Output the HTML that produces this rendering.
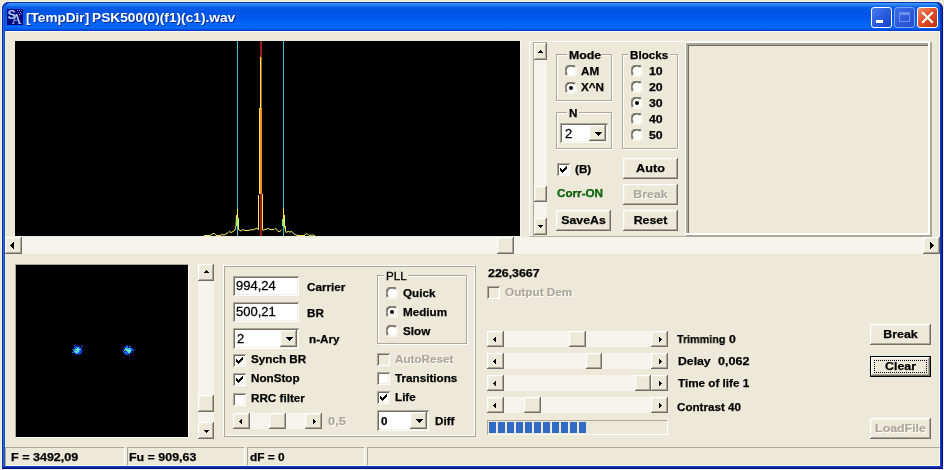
<!DOCTYPE html>
<html><head><meta charset="utf-8"><title>PSK500</title><style>
html,body{margin:0;padding:0}
body{width:944px;height:470px;position:relative;overflow:hidden;background:#ece7d6;font-family:"Liberation Sans",sans-serif;font-size:11.5px}
#win{position:absolute;left:2px;top:2px;width:941px;height:467px;background:#ece9d8;box-sizing:border-box;border-radius:7px 7px 0 0;box-shadow:0 0 0 1px #f3f3f4}
#bl{position:absolute;left:2px;top:20px;width:3px;height:449px;background:linear-gradient(90deg,#0831b4 0,#0831b4 33.3%,#2a62e4 33.3%,#2a62e4 66.6%,#1a50b0 66.6%)}
#br{position:absolute;left:940px;top:20px;width:3px;height:449px;background:linear-gradient(90deg,#1638bc 0,#1638bc 33.3%,#0c2cac 33.3%,#0c2cac 66.6%,#021084 66.6%)}
#bb{position:absolute;left:2px;top:466px;width:941px;height:3px;background:linear-gradient(180deg,#1638bc 0,#1638bc 33.3%,#0c2cac 33.3%,#0c2cac 66.6%,#021084 66.6%)}
#inl{position:absolute;left:5px;top:31px;width:935px;height:435px;box-sizing:border-box;border:1px solid #fbfbf8;border-left-color:#e6f2fb}
#tb{position:absolute;left:2px;top:2px;width:941px;height:29px;border-radius:7px 7px 0 0;box-shadow:inset 1px 1px 0 #0831b4,inset -1px 0 0 #021084,inset 2px 0 0 #2a62e4,inset 3px 0 0 #1a50c8,inset -3px 0 0 #1038bc;background:linear-gradient(180deg,#0a3fd0 0,#3c96ff 5%,#2a80f8 10%,#0560e8 18%,#0055e5 30%,#0058ee 55%,#0465fb 75%,#0668ff 88%,#0358ea 93%,#0038c8 100%)}
#ico{position:absolute;left:7px;top:9px}
.title{position:absolute;will-change:transform;transform-origin:0 50%;top:9px;line-height:18px;color:#fff;font-weight:bold;font-size:13.6px;text-shadow:1px 1px 0 #0a2a90;white-space:nowrap}
.cb{position:absolute;top:7px;width:21px;height:21px;box-sizing:border-box;border:1px solid #fff;border-radius:3px;background:linear-gradient(135deg,#4a7cf0 0,#2a5ce0 50%,#1a44c8 100%)}
.cb.dim{border-color:#7f9fe8;background:linear-gradient(135deg,#3f6fe8 0,#2a58dc 60%,#2450d0 100%)}
.cb.red{background:linear-gradient(135deg,#f09070 0,#e05028 45%,#c03010 100%)}
.t{position:absolute;will-change:transform;white-space:nowrap;line-height:16px;height:16px;color:#000;transform-origin:0 50%;transform:scaleX(1.015)}
.t.b{font-weight:bold;-webkit-text-stroke:.25px #000}
.t.n{font-weight:normal;-webkit-text-stroke:.3px #000}
.t.e{font-weight:normal;font-size:13px;transform:none;-webkit-text-stroke:.3px #000}
.t.c{text-align:center;transform-origin:50% 50%;transform:scaleX(1.075)}
.t.dis{color:#aca899;text-shadow:1px 1px 0 #fff;-webkit-text-stroke:.2px #aca899}
.r{position:absolute;box-sizing:border-box;background:#ece9d8;box-shadow:inset -1px -1px 0 #716f64,inset 1px 1px 0 #fff,inset -2px -2px 0 #aca899,inset 2px 2px 0 #f1efe2}
.s{position:absolute;box-sizing:border-box;box-shadow:inset 1px 1px 0 #aca899,inset -1px -1px 0 #fff,inset 2px 2px 0 #716f64,inset -2px -2px 0 #f1efe2}
.trk{position:absolute;background:#f6f4ec repeating-conic-gradient(#fbfaf6 0 25%,#f0eee3 0 50%) 0 0/2px 2px}
.g{position:absolute;box-sizing:border-box;border:1px solid #aca899;box-shadow:1px 1px 0 #fff,inset 1px 1px 0 #fff}
.pg{position:absolute;box-sizing:border-box;border:1px solid;border-color:#aca899 #fff #fff #aca899}
.sp{position:absolute;box-sizing:border-box;border:1px solid;border-color:#aca899 #fff #fff #aca899}
#rp{position:absolute;left:685px;top:41px;width:247px;height:196px;box-sizing:border-box;border:2px solid;border-color:#fff #aca899 #aca899 #fff;border-left-width:1px;box-shadow:inset -1px -1px 0 #fff,inset -2px -2px 0 #fff,inset 1px 1px 0 #aca899,inset 2px 2px 0 #aca899,inset 3px 3px 0 #716f64}
#bp{position:absolute;left:223px;top:265px;width:253px;height:172px;box-sizing:border-box;border:1px solid;border-color:#fff #aca899 #aca899 #fff;box-shadow:inset 1px 1px 0 #aca899,inset -1px -1px 0 #fff}
</style></head><body>
<div id="win"></div><div id="bl"></div><div id="br"></div><div id="bb"></div><div id="inl"></div>
<div id="tb"></div>
<svg id="ico" width="16" height="16" viewBox="0 0 16 16"><rect width="16" height="16" fill="#06067e"/><text x="0.6" y="9.6" font-family="Liberation Sans,sans-serif" font-weight="bold" font-size="12.5" fill="#a9c6ea">S</text><text x="4.6" y="15.2" font-family="Liberation Serif,serif" font-size="14" fill="#b4d8ee">A</text><rect x="10" y="1" width="1" height="1" fill="#8a8ad8"/><rect x="12" y="1" width="1" height="1" fill="#9a9ae0"/><rect x="14" y="1" width="1" height="1" fill="#7a7ad0"/><rect x="11" y="3" width="1" height="1" fill="#8a8ad8"/><rect x="13" y="3" width="1" height="1" fill="#9a9ae0"/><rect x="12" y="5" width="1" height="1" fill="#dcdcff"/><rect x="14" y="4" width="1" height="1" fill="#7a7ad0"/></svg>
<span class="title" style="left:26px">[TempDir]</span>
<span class="title" style="left:92px;transform:scaleX(1.008)">PSK500(0)(f1)(c1).wav</span>
<div class="cb" style="left:871px"><div style="position:absolute;left:4px;top:12px;width:7px;height:3px;background:#fff"></div></div>
<div class="cb dim" style="left:894px"><div style="position:absolute;left:4px;top:4px;width:11px;height:10px;border:1px solid #6f8fe8;border-top-width:3px;box-sizing:border-box"></div></div>
<div class="cb red" style="left:917px"><svg width="21" height="21" style="position:absolute;left:-1px;top:-1px"><path d="M6 6 L15 15 M15 6 L6 15" stroke="#fff" stroke-width="2.2" stroke-linecap="square"/></svg></div>
<div style="position:absolute;left:15px;top:41px;width:505px;height:195px;background:#000"></div>
<div style="position:absolute;left:520px;top:41px;width:1px;height:196px;background:#f6f5ee"></div>
<svg width="505" height="195" viewBox="15 41 505 195" style="position:absolute;left:15px;top:41px" shape-rendering="crispEdges">
<rect x="237" y="41" width="1" height="195" fill="#3fbfd6"/>
<rect x="283" y="41" width="1" height="195" fill="#3fbfd6"/>
<rect x="260" y="41" width="2" height="195" fill="#9c1c14"/>
<g fill="none" stroke="#f2ea62" stroke-width="1" shape-rendering="auto">
<polyline points="204,235.5 209,235.5 211,235 213,233.5 214.5,233.5 216,235.5 220,235.5 222,234.5 224,235 226,234 228,232.5 229,231.5 231,232.5 233,231.5 235,230 236,226 236.5,215"/>
<polyline points="238.5,219 238.5,229 239.5,230.5 241,231 243,229.5 245,230.5 249,230.5 251,229.5 253,230 255,229 257,228 258,229.5"/>
<polyline points="262.5,229.5 264,230.5 265,229 267,229.5 268,228 270,229.5 274,229.5 275,228.5 277,229.5 279,232 281,230.5 282,229.5"/>
<polyline points="284.5,215 284.5,226 286,232.5 288,231.5 290,232 292,231.5 294,234 296,235 299,235.5 304,235.5 306,234 307,233.5 308.5,235 310,235.5 312,235 315,235.5"/>
</g>
<rect x="236" y="215" width="1" height="4" fill="#f2ea62"/><rect x="237" y="209" width="1" height="9" fill="#f4e83a"/><rect x="236" y="219" width="2" height="7" fill="#9af070"/><rect x="238" y="218" width="1" height="12" fill="#e8ee60"/>
<rect x="284" y="215" width="1" height="12" fill="#f2ea62"/><rect x="283" y="208" width="1" height="11" fill="#f4e83a"/><rect x="282" y="219" width="2" height="7" fill="#9af070"/><rect x="285" y="226" width="1" height="5" fill="#e8ee60"/>
<rect x="260" y="57" width="1" height="51" fill="#f6ec4a"/><rect x="261" y="57" width="1" height="51" fill="#b87820" opacity=".55"/>
<rect x="259" y="108" width="1" height="87" fill="#f8ea50"/><rect x="260" y="108" width="2" height="86" fill="#f28a1e"/><rect x="260" y="106" width="1" height="3" fill="#f8ea50"/>
<rect x="258" y="195" width="1" height="35" fill="#f2ea62"/><rect x="259" y="194" width="1" height="42" fill="#200800"/><rect x="262" y="194" width="1" height="36" fill="#f2ea62"/>
<rect x="204" y="235" width="6" height="1" fill="#f2ea62"/><rect x="297" y="235" width="8" height="1" fill="#f2ea62"/>
</svg>

<div style="position:absolute;left:529px;top:41px;width:156px;height:196px;border-left:1px solid #fff;border-top:1px solid #fff;border-bottom:1px solid #b4b1a2;box-sizing:border-box"></div>
<div style="position:absolute;left:533px;top:42px;width:14px;height:194px;border-left:1px solid #aca899;border-top:1px solid #aca899;box-sizing:border-box"></div>
<div class="trk" style="left:534px;top:43px;width:13px;height:192px"></div>
<div class="r" style="left:534px;top:43px;width:13px;height:17px;"></div>
<div class="r" style="left:534px;top:218px;width:13px;height:17px;"></div>
<div class="r" style="left:534px;top:186px;width:13px;height:16px;"></div>
<svg width="5" height="3" shape-rendering="crispEdges" style="position:absolute;left:538px;top:50px" fill="#000"><rect x="2" y="0" width="1" height="1"/><rect x="1" y="1" width="3" height="1"/><rect x="0" y="2" width="5" height="1"/></svg>
<svg width="5" height="3" shape-rendering="crispEdges" style="position:absolute;left:538px;top:225px" fill="#000"><rect x="0" y="0" width="5" height="1"/><rect x="1" y="1" width="3" height="1"/><rect x="2" y="2" width="1" height="1"/></svg>
<div class="g" style="left:556px;top:54px;width:56px;height:47px"></div>
<div style="position:absolute;left:567px;top:54px;width:34px;height:2px;background:#ece9d8"></div>
<span class="t b" style="left:569px;top:47px;transform:scaleX(1.07);">Mode</span>
<svg width="12" height="12" style="position:absolute;left:565px;top:65px"><circle cx="6" cy="6" r="5.5" fill="#ffffff"/><path d="M1.6 10.4 A6 6 0 0 1 10.4 1.6" stroke="#8f8c7e" stroke-width="1.2" fill="none"/><path d="M2.4 9.6 A5 5 0 0 1 9.6 2.4" stroke="#55534a" stroke-width="1.1" fill="none"/><path d="M10.4 1.6 A6 6 0 0 1 1.6 10.4" stroke="#ffffff" stroke-width="1" fill="none"/><path d="M9.6 2.4 A5 5 0 0 1 2.4 9.6" stroke="#f1efe2" stroke-width="1" fill="none"/><circle cx="6" cy="6" r="4" fill="#fff"/></svg>
<span class="t b" style="left:581px;top:63px;">AM</span>
<svg width="12" height="12" style="position:absolute;left:565px;top:82px"><circle cx="6" cy="6" r="5.5" fill="#ffffff"/><path d="M1.6 10.4 A6 6 0 0 1 10.4 1.6" stroke="#8f8c7e" stroke-width="1.2" fill="none"/><path d="M2.4 9.6 A5 5 0 0 1 9.6 2.4" stroke="#55534a" stroke-width="1.1" fill="none"/><path d="M10.4 1.6 A6 6 0 0 1 1.6 10.4" stroke="#ffffff" stroke-width="1" fill="none"/><path d="M9.6 2.4 A5 5 0 0 1 2.4 9.6" stroke="#f1efe2" stroke-width="1" fill="none"/><circle cx="6" cy="6" r="4" fill="#fff"/><circle cx="6" cy="6" r="2" fill="#000"/></svg>
<span class="t b" style="left:581px;top:79px;">X^N</span>
<div class="g" style="left:556px;top:112px;width:56px;height:37px"></div>
<div style="position:absolute;left:567px;top:112px;width:12px;height:2px;background:#ece9d8"></div>
<span class="t b" style="left:569px;top:105px;">N</span>
<div class="s" style="left:560px;top:123px;width:48px;height:20px;background:#fff;"></div>
<div class="r" style="left:589px;top:125px;width:17px;height:16px;"></div>
<svg width="7" height="4" shape-rendering="crispEdges" style="position:absolute;left:595px;top:132px" fill="#000"><rect x="0" y="0" width="7" height="1"/><rect x="1" y="1" width="5" height="1"/><rect x="2" y="2" width="3" height="1"/><rect x="3" y="3" width="1" height="1"/></svg>
<span class="t e" style="left:565px;top:126px;">2</span>
<div class="g" style="left:622px;top:54px;width:56px;height:95px"></div>
<div style="position:absolute;left:628px;top:54px;width:42px;height:2px;background:#ece9d8"></div>
<span class="t b" style="left:630px;top:47px;">Blocks</span>
<svg width="12" height="12" style="position:absolute;left:631px;top:65px"><circle cx="6" cy="6" r="5.5" fill="#ffffff"/><path d="M1.6 10.4 A6 6 0 0 1 10.4 1.6" stroke="#8f8c7e" stroke-width="1.2" fill="none"/><path d="M2.4 9.6 A5 5 0 0 1 9.6 2.4" stroke="#55534a" stroke-width="1.1" fill="none"/><path d="M10.4 1.6 A6 6 0 0 1 1.6 10.4" stroke="#ffffff" stroke-width="1" fill="none"/><path d="M9.6 2.4 A5 5 0 0 1 2.4 9.6" stroke="#f1efe2" stroke-width="1" fill="none"/><circle cx="6" cy="6" r="4" fill="#fff"/></svg>
<span class="t b" style="left:649px;top:63px;transform:scaleX(1.07);">10</span>
<svg width="12" height="12" style="position:absolute;left:631px;top:81px"><circle cx="6" cy="6" r="5.5" fill="#ffffff"/><path d="M1.6 10.4 A6 6 0 0 1 10.4 1.6" stroke="#8f8c7e" stroke-width="1.2" fill="none"/><path d="M2.4 9.6 A5 5 0 0 1 9.6 2.4" stroke="#55534a" stroke-width="1.1" fill="none"/><path d="M10.4 1.6 A6 6 0 0 1 1.6 10.4" stroke="#ffffff" stroke-width="1" fill="none"/><path d="M9.6 2.4 A5 5 0 0 1 2.4 9.6" stroke="#f1efe2" stroke-width="1" fill="none"/><circle cx="6" cy="6" r="4" fill="#fff"/></svg>
<span class="t b" style="left:649px;top:79px;transform:scaleX(1.07);">20</span>
<svg width="12" height="12" style="position:absolute;left:631px;top:97px"><circle cx="6" cy="6" r="5.5" fill="#ffffff"/><path d="M1.6 10.4 A6 6 0 0 1 10.4 1.6" stroke="#8f8c7e" stroke-width="1.2" fill="none"/><path d="M2.4 9.6 A5 5 0 0 1 9.6 2.4" stroke="#55534a" stroke-width="1.1" fill="none"/><path d="M10.4 1.6 A6 6 0 0 1 1.6 10.4" stroke="#ffffff" stroke-width="1" fill="none"/><path d="M9.6 2.4 A5 5 0 0 1 2.4 9.6" stroke="#f1efe2" stroke-width="1" fill="none"/><circle cx="6" cy="6" r="4" fill="#fff"/><circle cx="6" cy="6" r="2" fill="#000"/></svg>
<span class="t b" style="left:649px;top:95px;transform:scaleX(1.07);">30</span>
<svg width="12" height="12" style="position:absolute;left:631px;top:113px"><circle cx="6" cy="6" r="5.5" fill="#ffffff"/><path d="M1.6 10.4 A6 6 0 0 1 10.4 1.6" stroke="#8f8c7e" stroke-width="1.2" fill="none"/><path d="M2.4 9.6 A5 5 0 0 1 9.6 2.4" stroke="#55534a" stroke-width="1.1" fill="none"/><path d="M10.4 1.6 A6 6 0 0 1 1.6 10.4" stroke="#ffffff" stroke-width="1" fill="none"/><path d="M9.6 2.4 A5 5 0 0 1 2.4 9.6" stroke="#f1efe2" stroke-width="1" fill="none"/><circle cx="6" cy="6" r="4" fill="#fff"/></svg>
<span class="t b" style="left:649px;top:111px;transform:scaleX(1.07);">40</span>
<svg width="12" height="12" style="position:absolute;left:631px;top:129px"><circle cx="6" cy="6" r="5.5" fill="#ffffff"/><path d="M1.6 10.4 A6 6 0 0 1 10.4 1.6" stroke="#8f8c7e" stroke-width="1.2" fill="none"/><path d="M2.4 9.6 A5 5 0 0 1 9.6 2.4" stroke="#55534a" stroke-width="1.1" fill="none"/><path d="M10.4 1.6 A6 6 0 0 1 1.6 10.4" stroke="#ffffff" stroke-width="1" fill="none"/><path d="M9.6 2.4 A5 5 0 0 1 2.4 9.6" stroke="#f1efe2" stroke-width="1" fill="none"/><circle cx="6" cy="6" r="4" fill="#fff"/></svg>
<span class="t b" style="left:649px;top:127px;transform:scaleX(1.07);">50</span>
<div class="s" style="left:557px;top:163px;width:13px;height:13px;background:#fff;"><svg width="13" height="13" shape-rendering="crispEdges" style="position:absolute;left:0;top:0"><rect x="3" y="5" width="1" height="3" fill="#000"/><rect x="4" y="6" width="1" height="3" fill="#000"/><rect x="5" y="7" width="1" height="3" fill="#000"/><rect x="6" y="6" width="1" height="3" fill="#000"/><rect x="7" y="5" width="1" height="3" fill="#000"/><rect x="8" y="4" width="1" height="3" fill="#000"/><rect x="9" y="3" width="1" height="3" fill="#000"/></svg></div>
<span class="t b" style="left:575px;top:161px;">(B)</span>
<span class="t b" style="left:557px;top:185px;color:#008000">Corr-ON</span>
<div class="r" style="left:623px;top:158px;width:55px;height:21px;"></div>
<span class="t c b" style="left:623px;top:158px;width:55px;height:20px;line-height:20px;transform:scaleX(1.1);">Auto</span>
<div class="r" style="left:623px;top:184px;width:55px;height:21px;"></div>
<span class="t c b dis" style="left:623px;top:184px;width:55px;height:20px;line-height:20px;">Break</span>
<div class="r" style="left:623px;top:210px;width:55px;height:21px;"></div>
<span class="t c b" style="left:623px;top:210px;width:55px;height:20px;line-height:20px;">Reset</span>
<div class="r" style="left:556px;top:210px;width:55px;height:21px;"></div>
<span class="t c b" style="left:556px;top:210px;width:55px;height:20px;line-height:20px;transform:scaleX(1.07);">SaveAs</span>
<div id="rp"></div>
<div class="trk" style="left:5px;top:237px;width:935px;height:17px"></div>
<div class="r" style="left:5px;top:237px;width:17px;height:17px;"></div>
<div class="r" style="left:923px;top:237px;width:17px;height:17px;"></div>
<div class="r" style="left:497px;top:237px;width:17px;height:17px;"></div>
<svg width="4" height="7" shape-rendering="crispEdges" style="position:absolute;left:10px;top:242px" fill="#000"><rect x="0" y="3" width="1" height="1"/><rect x="1" y="2" width="1" height="3"/><rect x="2" y="1" width="1" height="5"/><rect x="3" y="0" width="1" height="7"/></svg>
<svg width="4" height="7" shape-rendering="crispEdges" style="position:absolute;left:930px;top:242px" fill="#000"><rect x="0" y="0" width="1" height="7"/><rect x="1" y="1" width="1" height="5"/><rect x="2" y="2" width="1" height="3"/><rect x="3" y="3" width="1" height="1"/></svg>
<div style="position:absolute;left:15px;top:264px;width:174px;height:174px;box-sizing:border-box;border:1px solid;border-color:#aca899 #fff #fff #aca899;background:#000"><svg width="172" height="172" viewBox="16 265 172 172" style="position:absolute;left:0;top:0" shape-rendering="crispEdges"><g style="filter:blur(.45px)"><rect x="77" y="353" width="1" height="1" fill="#1e78ff"/><rect x="75" y="352" width="1" height="1" fill="#40c8f0"/><rect x="76" y="349" width="1" height="1" fill="#7df0b0"/><rect x="81" y="350" width="1" height="1" fill="#1450e6"/><rect x="77" y="351" width="1" height="1" fill="#40c8f0"/><rect x="80" y="350" width="1" height="1" fill="#1e78ff"/><rect x="78" y="348" width="1" height="1" fill="#40c8f0"/><rect x="74" y="347" width="1" height="1" fill="#1450e6"/><rect x="73" y="350" width="1" height="1" fill="#1e78ff"/><rect x="77" y="349" width="1" height="1" fill="#7df0b0"/><rect x="77" y="347" width="1" height="1" fill="#1e78ff"/><rect x="77" y="350" width="1" height="1" fill="#7df0b0"/><rect x="79" y="348" width="1" height="1" fill="#1450e6"/><rect x="76" y="346" width="1" height="1" fill="#1450e6"/><rect x="74" y="352" width="1" height="1" fill="#1450e6"/><rect x="72" y="352" width="1" height="1" fill="#1e78ff"/><rect x="78" y="349" width="1" height="1" fill="#7df0b0"/><rect x="78" y="351" width="1" height="1" fill="#7df0b0"/><rect x="79" y="350" width="1" height="1" fill="#1e78ff"/><rect x="75" y="350" width="1" height="1" fill="#40c8f0"/><rect x="73" y="348" width="1" height="1" fill="#0a2ab0"/><rect x="75" y="346" width="1" height="1" fill="#0a2ab0"/><rect x="81" y="345" width="1" height="1" fill="#1450e6"/><rect x="81" y="346" width="1" height="1" fill="#061a70"/><rect x="79" y="349" width="1" height="1" fill="#7df0b0"/><rect x="81" y="352" width="1" height="1" fill="#1450e6"/><rect x="76" y="351" width="1" height="1" fill="#7df0b0"/><rect x="76" y="353" width="1" height="1" fill="#1e78ff"/><rect x="76" y="350" width="1" height="1" fill="#1e78ff"/><rect x="77" y="348" width="1" height="1" fill="#7df0b0"/><rect x="82" y="346" width="1" height="1" fill="#1450e6"/><rect x="69" y="350" width="1" height="1" fill="#061a70"/><rect x="78" y="352" width="1" height="1" fill="#1e78ff"/><rect x="81" y="351" width="1" height="1" fill="#1450e6"/><rect x="75" y="355" width="1" height="1" fill="#061a70"/><rect x="74" y="351" width="1" height="1" fill="#40c8f0"/><rect x="75" y="348" width="1" height="1" fill="#1e78ff"/><rect x="74" y="349" width="1" height="1" fill="#1e78ff"/><rect x="80" y="349" width="1" height="1" fill="#1e78ff"/><rect x="77" y="352" width="1" height="1" fill="#40c8f0"/><rect x="76" y="348" width="1" height="1" fill="#1e78ff"/><rect x="76" y="347" width="1" height="1" fill="#1e78ff"/><rect x="78" y="350" width="1" height="1" fill="#40c8f0"/><rect x="74" y="345" width="1" height="1" fill="#1450e6"/><rect x="75" y="349" width="1" height="1" fill="#40c8f0"/><rect x="76" y="352" width="1" height="1" fill="#7df0b0"/><rect x="79" y="346" width="1" height="1" fill="#1450e6"/><rect x="78" y="347" width="1" height="1" fill="#40c8f0"/><rect x="75" y="351" width="1" height="1" fill="#40c8f0"/><rect x="83" y="350" width="1" height="1" fill="#061a70"/><rect x="77" y="346" width="1" height="1" fill="#0a2ab0"/><rect x="80" y="348" width="1" height="1" fill="#1450e6"/><rect x="81" y="348" width="1" height="1" fill="#1450e6"/><rect x="77" y="354" width="1" height="1" fill="#1450e6"/><rect x="73" y="349" width="1" height="1" fill="#1e78ff"/><rect x="79" y="353" width="1" height="1" fill="#0a2ab0"/><rect x="81" y="349" width="1" height="1" fill="#0a2ab0"/><rect x="79" y="351" width="1" height="1" fill="#1e78ff"/><rect x="79" y="352" width="1" height="1" fill="#1450e6"/><rect x="73" y="352" width="1" height="1" fill="#1450e6"/><rect x="80" y="353" width="1" height="1" fill="#1450e6"/><rect x="74" y="346" width="1" height="1" fill="#061a70"/><rect x="75" y="347" width="1" height="1" fill="#1450e6"/><rect x="77" y="345" width="1" height="1" fill="#061a70"/><rect x="74" y="350" width="1" height="1" fill="#1e78ff"/><rect x="80" y="352" width="1" height="1" fill="#0a2ab0"/><rect x="78" y="353" width="1" height="1" fill="#1e78ff"/><rect x="75" y="345" width="1" height="1" fill="#061a70"/><rect x="75" y="353" width="1" height="1" fill="#1450e6"/><rect x="81" y="355" width="1" height="1" fill="#061a70"/><rect x="73" y="351" width="1" height="1" fill="#0a2ab0"/><rect x="76" y="345" width="1" height="1" fill="#061a70"/><rect x="80" y="347" width="1" height="1" fill="#0a2ab0"/><rect x="81" y="353" width="1" height="1" fill="#061a70"/><rect x="79" y="354" width="1" height="1" fill="#0a2ab0"/><rect x="80" y="351" width="1" height="1" fill="#0a2ab0"/><rect x="74" y="353" width="1" height="1" fill="#0a2ab0"/><rect x="79" y="347" width="1" height="1" fill="#0a2ab0"/><rect x="125" y="351" width="1" height="1" fill="#0a2ab0"/><rect x="130" y="349" width="1" height="1" fill="#40c8f0"/><rect x="124" y="350" width="1" height="1" fill="#7df0b0"/><rect x="129" y="352" width="1" height="1" fill="#40c8f0"/><rect x="125" y="347" width="1" height="1" fill="#0a2ab0"/><rect x="129" y="351" width="1" height="1" fill="#40c8f0"/><rect x="131" y="352" width="1" height="1" fill="#1450e6"/><rect x="127" y="349" width="1" height="1" fill="#40c8f0"/><rect x="133" y="349" width="1" height="1" fill="#1450e6"/><rect x="126" y="348" width="1" height="1" fill="#7df0b0"/><rect x="128" y="350" width="1" height="1" fill="#7df0b0"/><rect x="127" y="350" width="1" height="1" fill="#7df0b0"/><rect x="128" y="351" width="1" height="1" fill="#7df0b0"/><rect x="130" y="350" width="1" height="1" fill="#7df0b0"/><rect x="123" y="351" width="1" height="1" fill="#1450e6"/><rect x="126" y="350" width="1" height="1" fill="#7df0b0"/><rect x="135" y="350" width="1" height="1" fill="#061a70"/><rect x="129" y="347" width="1" height="1" fill="#1450e6"/><rect x="127" y="351" width="1" height="1" fill="#40c8f0"/><rect x="128" y="348" width="1" height="1" fill="#40c8f0"/><rect x="129" y="348" width="1" height="1" fill="#40c8f0"/><rect x="132" y="349" width="1" height="1" fill="#1450e6"/><rect x="129" y="350" width="1" height="1" fill="#7df0b0"/><rect x="130" y="351" width="1" height="1" fill="#40c8f0"/><rect x="131" y="349" width="1" height="1" fill="#1450e6"/><rect x="128" y="349" width="1" height="1" fill="#40c8f0"/><rect x="125" y="349" width="1" height="1" fill="#40c8f0"/><rect x="129" y="353" width="1" height="1" fill="#1e78ff"/><rect x="130" y="352" width="1" height="1" fill="#1450e6"/><rect x="128" y="352" width="1" height="1" fill="#7df0b0"/><rect x="126" y="354" width="1" height="1" fill="#1450e6"/><rect x="130" y="348" width="1" height="1" fill="#1e78ff"/><rect x="133" y="354" width="1" height="1" fill="#061a70"/><rect x="128" y="353" width="1" height="1" fill="#1e78ff"/><rect x="126" y="352" width="1" height="1" fill="#1e78ff"/><rect x="123" y="348" width="1" height="1" fill="#0a2ab0"/><rect x="131" y="348" width="1" height="1" fill="#1e78ff"/><rect x="127" y="345" width="1" height="1" fill="#061a70"/><rect x="129" y="355" width="1" height="1" fill="#061a70"/><rect x="133" y="351" width="1" height="1" fill="#061a70"/><rect x="127" y="354" width="1" height="1" fill="#1450e6"/><rect x="126" y="349" width="1" height="1" fill="#40c8f0"/><rect x="123" y="349" width="1" height="1" fill="#0a2ab0"/><rect x="129" y="349" width="1" height="1" fill="#40c8f0"/><rect x="124" y="353" width="1" height="1" fill="#0a2ab0"/><rect x="131" y="350" width="1" height="1" fill="#1e78ff"/><rect x="133" y="350" width="1" height="1" fill="#061a70"/><rect x="126" y="345" width="1" height="1" fill="#1450e6"/><rect x="124" y="357" width="1" height="1" fill="#061a70"/><rect x="127" y="346" width="1" height="1" fill="#1e78ff"/><rect x="127" y="347" width="1" height="1" fill="#1e78ff"/><rect x="129" y="346" width="1" height="1" fill="#1e78ff"/><rect x="125" y="352" width="1" height="1" fill="#1e78ff"/><rect x="124" y="352" width="1" height="1" fill="#1e78ff"/><rect x="132" y="350" width="1" height="1" fill="#1450e6"/><rect x="127" y="348" width="1" height="1" fill="#40c8f0"/><rect x="131" y="351" width="1" height="1" fill="#0a2ab0"/><rect x="124" y="347" width="1" height="1" fill="#1450e6"/><rect x="126" y="353" width="1" height="1" fill="#1e78ff"/><rect x="123" y="352" width="1" height="1" fill="#0a2ab0"/><rect x="130" y="347" width="1" height="1" fill="#0a2ab0"/><rect x="125" y="348" width="1" height="1" fill="#40c8f0"/><rect x="130" y="345" width="1" height="1" fill="#061a70"/><rect x="127" y="352" width="1" height="1" fill="#1e78ff"/><rect x="129" y="354" width="1" height="1" fill="#1450e6"/><rect x="134" y="349" width="1" height="1" fill="#061a70"/><rect x="124" y="349" width="1" height="1" fill="#1450e6"/><rect x="125" y="354" width="1" height="1" fill="#1450e6"/><rect x="125" y="353" width="1" height="1" fill="#0a2ab0"/><rect x="127" y="353" width="1" height="1" fill="#0a2ab0"/><rect x="130" y="346" width="1" height="1" fill="#0a2ab0"/><rect x="125" y="350" width="1" height="1" fill="#1e78ff"/><rect x="126" y="351" width="1" height="1" fill="#0a2ab0"/><rect x="129" y="357" width="1" height="1" fill="#061a70"/><rect x="125" y="346" width="1" height="1" fill="#0a2ab0"/><rect x="131" y="345" width="1" height="1" fill="#061a70"/><rect x="133" y="352" width="1" height="1" fill="#061a70"/><rect x="124" y="351" width="1" height="1" fill="#0a2ab0"/><rect x="126" y="346" width="1" height="1" fill="#1450e6"/><rect x="126" y="347" width="1" height="1" fill="#1450e6"/><rect x="128" y="355" width="1" height="1" fill="#061a70"/></g></svg></div>
<div class="trk" style="left:198px;top:264px;width:16px;height:175px"></div>
<div class="r" style="left:198px;top:264px;width:16px;height:17px;"></div>
<div class="r" style="left:198px;top:422px;width:16px;height:17px;"></div>
<div class="r" style="left:198px;top:395px;width:16px;height:17px;"></div>
<svg width="5" height="3" shape-rendering="crispEdges" style="position:absolute;left:204px;top:270px" fill="#000"><rect x="2" y="0" width="1" height="1"/><rect x="1" y="1" width="3" height="1"/><rect x="0" y="2" width="5" height="1"/></svg>
<svg width="5" height="3" shape-rendering="crispEdges" style="position:absolute;left:204px;top:430px" fill="#000"><rect x="0" y="0" width="5" height="1"/><rect x="1" y="1" width="3" height="1"/><rect x="2" y="2" width="1" height="1"/></svg>
<div id="bp"></div>
<div class="s" style="left:233px;top:276px;width:66px;height:20px;background:#fff;"></div>
<span class="t e" style="left:236px;top:278px;">994,24</span>
<div class="s" style="left:233px;top:302px;width:66px;height:20px;background:#fff;"></div>
<span class="t e" style="left:236px;top:304px;">500,21</span>
<div class="s" style="left:233px;top:328px;width:66px;height:21px;background:#fff;"></div>
<div class="r" style="left:280px;top:330px;width:17px;height:17px;"></div>
<svg width="7" height="4" shape-rendering="crispEdges" style="position:absolute;left:286px;top:337px" fill="#000"><rect x="0" y="0" width="7" height="1"/><rect x="1" y="1" width="5" height="1"/><rect x="2" y="2" width="3" height="1"/><rect x="3" y="3" width="1" height="1"/></svg>
<span class="t e" style="left:237px;top:331px;">2</span>
<span class="t b" style="left:307px;top:279px;">Carrier</span>
<span class="t b" style="left:307px;top:305px;">BR</span>
<span class="t b" style="left:309px;top:331px;">n-Ary</span>
<div class="s" style="left:233px;top:354px;width:13px;height:13px;background:#fff;"><svg width="13" height="13" shape-rendering="crispEdges" style="position:absolute;left:0;top:0"><rect x="3" y="5" width="1" height="3" fill="#000"/><rect x="4" y="6" width="1" height="3" fill="#000"/><rect x="5" y="7" width="1" height="3" fill="#000"/><rect x="6" y="6" width="1" height="3" fill="#000"/><rect x="7" y="5" width="1" height="3" fill="#000"/><rect x="8" y="4" width="1" height="3" fill="#000"/><rect x="9" y="3" width="1" height="3" fill="#000"/></svg></div>
<span class="t b" style="left:251px;top:351px;">Synch BR</span>
<div class="s" style="left:233px;top:373px;width:13px;height:13px;background:#fff;"><svg width="13" height="13" shape-rendering="crispEdges" style="position:absolute;left:0;top:0"><rect x="3" y="5" width="1" height="3" fill="#000"/><rect x="4" y="6" width="1" height="3" fill="#000"/><rect x="5" y="7" width="1" height="3" fill="#000"/><rect x="6" y="6" width="1" height="3" fill="#000"/><rect x="7" y="5" width="1" height="3" fill="#000"/><rect x="8" y="4" width="1" height="3" fill="#000"/><rect x="9" y="3" width="1" height="3" fill="#000"/></svg></div>
<span class="t b" style="left:251px;top:370px;">NonStop</span>
<div class="s" style="left:233px;top:393px;width:13px;height:13px;background:#fff;"></div>
<span class="t b" style="left:251px;top:390px;">RRC filter</span>
<div class="trk" style="left:233px;top:413px;width:89px;height:16px"></div>
<div class="r" style="left:233px;top:413px;width:17px;height:16px;"></div>
<div class="r" style="left:305px;top:413px;width:17px;height:16px;"></div>
<div class="r" style="left:269px;top:413px;width:17px;height:16px;"></div>
<svg width="3" height="5" shape-rendering="crispEdges" style="position:absolute;left:239px;top:419px" fill="#000"><rect x="0" y="2" width="1" height="1"/><rect x="1" y="1" width="1" height="3"/><rect x="2" y="0" width="1" height="5"/></svg>
<svg width="3" height="5" shape-rendering="crispEdges" style="position:absolute;left:313px;top:419px" fill="#000"><rect x="0" y="0" width="1" height="5"/><rect x="1" y="1" width="1" height="3"/><rect x="2" y="2" width="1" height="1"/></svg>
<span class="t b dis" style="left:327.5px;top:413px;transform:scaleX(1.127);">0,5</span>
<div class="g" style="left:377px;top:275px;width:90px;height:69px"></div>
<div style="position:absolute;left:383.5px;top:275px;width:24px;height:2px;background:#ece9d8"></div>
<span class="t n" style="left:385.5px;top:268px;">PLL</span>
<svg width="12" height="12" style="position:absolute;left:386px;top:287px"><circle cx="6" cy="6" r="5.5" fill="#ffffff"/><path d="M1.6 10.4 A6 6 0 0 1 10.4 1.6" stroke="#8f8c7e" stroke-width="1.2" fill="none"/><path d="M2.4 9.6 A5 5 0 0 1 9.6 2.4" stroke="#55534a" stroke-width="1.1" fill="none"/><path d="M10.4 1.6 A6 6 0 0 1 1.6 10.4" stroke="#ffffff" stroke-width="1" fill="none"/><path d="M9.6 2.4 A5 5 0 0 1 2.4 9.6" stroke="#f1efe2" stroke-width="1" fill="none"/><circle cx="6" cy="6" r="4" fill="#fff"/></svg>
<span class="t b" style="left:403px;top:285px;">Quick</span>
<svg width="12" height="12" style="position:absolute;left:386px;top:306px"><circle cx="6" cy="6" r="5.5" fill="#ffffff"/><path d="M1.6 10.4 A6 6 0 0 1 10.4 1.6" stroke="#8f8c7e" stroke-width="1.2" fill="none"/><path d="M2.4 9.6 A5 5 0 0 1 9.6 2.4" stroke="#55534a" stroke-width="1.1" fill="none"/><path d="M10.4 1.6 A6 6 0 0 1 1.6 10.4" stroke="#ffffff" stroke-width="1" fill="none"/><path d="M9.6 2.4 A5 5 0 0 1 2.4 9.6" stroke="#f1efe2" stroke-width="1" fill="none"/><circle cx="6" cy="6" r="4" fill="#fff"/><circle cx="6" cy="6" r="2" fill="#000"/></svg>
<span class="t b" style="left:403px;top:304px;">Medium</span>
<svg width="12" height="12" style="position:absolute;left:386px;top:325px"><circle cx="6" cy="6" r="5.5" fill="#ffffff"/><path d="M1.6 10.4 A6 6 0 0 1 10.4 1.6" stroke="#8f8c7e" stroke-width="1.2" fill="none"/><path d="M2.4 9.6 A5 5 0 0 1 9.6 2.4" stroke="#55534a" stroke-width="1.1" fill="none"/><path d="M10.4 1.6 A6 6 0 0 1 1.6 10.4" stroke="#ffffff" stroke-width="1" fill="none"/><path d="M9.6 2.4 A5 5 0 0 1 2.4 9.6" stroke="#f1efe2" stroke-width="1" fill="none"/><circle cx="6" cy="6" r="4" fill="#fff"/></svg>
<span class="t b" style="left:403px;top:323px;">Slow</span>
<div class="s" style="left:377px;top:353px;width:13px;height:13px;background:#ece9d8;"></div>
<span class="t b dis" style="left:395px;top:351px;">AutoReset</span>
<div class="s" style="left:377px;top:372px;width:13px;height:13px;background:#fff;"></div>
<span class="t b" style="left:395px;top:370px;">Transitions</span>
<div class="s" style="left:377px;top:391px;width:13px;height:13px;background:#fff;"><svg width="13" height="13" shape-rendering="crispEdges" style="position:absolute;left:0;top:0"><rect x="3" y="5" width="1" height="3" fill="#000"/><rect x="4" y="6" width="1" height="3" fill="#000"/><rect x="5" y="7" width="1" height="3" fill="#000"/><rect x="6" y="6" width="1" height="3" fill="#000"/><rect x="7" y="5" width="1" height="3" fill="#000"/><rect x="8" y="4" width="1" height="3" fill="#000"/><rect x="9" y="3" width="1" height="3" fill="#000"/></svg></div>
<span class="t b" style="left:395px;top:389px;">Life</span>
<div class="s" style="left:377px;top:410px;width:52px;height:21px;background:#fff;"></div>
<div class="r" style="left:410px;top:412px;width:17px;height:17px;"></div>
<svg width="7" height="4" shape-rendering="crispEdges" style="position:absolute;left:416px;top:419px" fill="#000"><rect x="0" y="0" width="7" height="1"/><rect x="1" y="1" width="5" height="1"/><rect x="2" y="2" width="3" height="1"/><rect x="3" y="3" width="1" height="1"/></svg>
<span class="t b" style="left:381px;top:413px;">0</span>
<span class="t b" style="left:435px;top:413px;">Diff</span>
<span class="t b" style="left:487.5px;top:265px;transform:scaleX(1.075);">226,3667</span>
<div class="s" style="left:487px;top:286px;width:13px;height:13px;background:#ece9d8;"></div>
<span class="t b dis" style="left:505px;top:284px;transform:scaleX(1.023);">Output Dem</span>
<div class="trk" style="left:487px;top:331px;width:181px;height:16px"></div>
<div class="r" style="left:487px;top:331px;width:17px;height:16px;"></div>
<div class="r" style="left:651px;top:331px;width:17px;height:16px;"></div>
<div class="r" style="left:569px;top:331px;width:17px;height:16px;"></div>
<svg width="3" height="5" shape-rendering="crispEdges" style="position:absolute;left:493px;top:337px" fill="#000"><rect x="0" y="2" width="1" height="1"/><rect x="1" y="1" width="1" height="3"/><rect x="2" y="0" width="1" height="5"/></svg>
<svg width="3" height="5" shape-rendering="crispEdges" style="position:absolute;left:659px;top:337px" fill="#000"><rect x="0" y="0" width="1" height="5"/><rect x="1" y="1" width="1" height="3"/><rect x="2" y="2" width="1" height="1"/></svg>
<div class="trk" style="left:487px;top:353px;width:181px;height:16px"></div>
<div class="r" style="left:487px;top:353px;width:17px;height:16px;"></div>
<div class="r" style="left:651px;top:353px;width:17px;height:16px;"></div>
<div class="r" style="left:586px;top:353px;width:16px;height:16px;"></div>
<svg width="3" height="5" shape-rendering="crispEdges" style="position:absolute;left:493px;top:359px" fill="#000"><rect x="0" y="2" width="1" height="1"/><rect x="1" y="1" width="1" height="3"/><rect x="2" y="0" width="1" height="5"/></svg>
<svg width="3" height="5" shape-rendering="crispEdges" style="position:absolute;left:659px;top:359px" fill="#000"><rect x="0" y="0" width="1" height="5"/><rect x="1" y="1" width="1" height="3"/><rect x="2" y="2" width="1" height="1"/></svg>
<div class="trk" style="left:487px;top:375px;width:181px;height:16px"></div>
<div class="r" style="left:487px;top:375px;width:17px;height:16px;"></div>
<div class="r" style="left:651px;top:375px;width:17px;height:16px;"></div>
<div class="r" style="left:635px;top:375px;width:16px;height:16px;"></div>
<svg width="3" height="5" shape-rendering="crispEdges" style="position:absolute;left:493px;top:381px" fill="#000"><rect x="0" y="2" width="1" height="1"/><rect x="1" y="1" width="1" height="3"/><rect x="2" y="0" width="1" height="5"/></svg>
<svg width="3" height="5" shape-rendering="crispEdges" style="position:absolute;left:659px;top:381px" fill="#000"><rect x="0" y="0" width="1" height="5"/><rect x="1" y="1" width="1" height="3"/><rect x="2" y="2" width="1" height="1"/></svg>
<div class="trk" style="left:487px;top:397px;width:181px;height:16px"></div>
<div class="r" style="left:487px;top:397px;width:17px;height:16px;"></div>
<div class="r" style="left:651px;top:397px;width:17px;height:16px;"></div>
<div class="r" style="left:524px;top:397px;width:17px;height:16px;"></div>
<svg width="3" height="5" shape-rendering="crispEdges" style="position:absolute;left:493px;top:403px" fill="#000"><rect x="0" y="2" width="1" height="1"/><rect x="1" y="1" width="1" height="3"/><rect x="2" y="0" width="1" height="5"/></svg>
<svg width="3" height="5" shape-rendering="crispEdges" style="position:absolute;left:659px;top:403px" fill="#000"><rect x="0" y="0" width="1" height="5"/><rect x="1" y="1" width="1" height="3"/><rect x="2" y="2" width="1" height="1"/></svg>
<span class="t b" style="left:677px;top:331px;transform:scaleX(0.935);">Trimming</span>
<span class="t b" style="left:729px;top:331px;transform:scaleX(1.065);">0</span>
<span class="t b" style="left:678px;top:353px;transform:scaleX(1.065);">Delay</span>
<span class="t b" style="left:717.5px;top:353px;transform:scaleX(1.09);">0,062</span>
<span class="t b" style="left:678px;top:375px;">Time of life 1</span>
<span class="t b" style="left:677px;top:399px;transform:scaleX(1.012);">Contrast 40</span>
<div class="pg" style="left:487px;top:420px;width:181px;height:15px"></div>
<div style="position:absolute;left:489px;top:422px;width:7px;height:11px;background:#316ac5"></div>
<div style="position:absolute;left:498px;top:422px;width:7px;height:11px;background:#316ac5"></div>
<div style="position:absolute;left:507px;top:422px;width:7px;height:11px;background:#316ac5"></div>
<div style="position:absolute;left:516px;top:422px;width:7px;height:11px;background:#316ac5"></div>
<div style="position:absolute;left:525px;top:422px;width:7px;height:11px;background:#316ac5"></div>
<div style="position:absolute;left:534px;top:422px;width:7px;height:11px;background:#316ac5"></div>
<div style="position:absolute;left:543px;top:422px;width:7px;height:11px;background:#316ac5"></div>
<div style="position:absolute;left:552px;top:422px;width:7px;height:11px;background:#316ac5"></div>
<div style="position:absolute;left:561px;top:422px;width:7px;height:11px;background:#316ac5"></div>
<div style="position:absolute;left:570px;top:422px;width:7px;height:11px;background:#316ac5"></div>
<div style="position:absolute;left:579px;top:422px;width:7px;height:11px;background:#316ac5"></div>
<div class="r" style="left:870px;top:324px;width:61px;height:21px;"></div>
<span class="t c b" style="left:870px;top:324px;width:61px;height:20px;line-height:20px;">Break</span>
<div style="position:absolute;left:870px;top:356px;width:61px;height:21px;background:#000"></div>
<div class="r" style="left:871px;top:357px;width:59px;height:19px;"></div>
<div style="position:absolute;left:874px;top:360px;width:51px;height:11px;border:1px dotted #000"></div>
<span class="t c b" style="left:870px;top:356px;width:61px;height:20px;line-height:20px;">Clear</span>
<div class="r" style="left:870px;top:418px;width:61px;height:21px;"></div>
<span class="t c b dis" style="left:870px;top:418px;width:61px;height:20px;line-height:20px;">LoadFile</span>
<div class="sp" style="left:5px;top:447px;width:120px;height:19px"></div>
<div class="sp" style="left:127px;top:447px;width:118px;height:19px"></div>
<div class="sp" style="left:247px;top:447px;width:118px;height:19px"></div>
<div class="sp" style="left:367px;top:447px;width:573px;height:19px"></div>
<span class="t b" style="left:11px;top:448.5px;transform:scaleX(1.09);">F = 3492,09</span>
<span class="t b" style="left:129px;top:448.5px;transform:scaleX(1.08);">Fu = 909,63</span>
<span class="t b" style="left:250px;top:448.5px;transform:scaleX(1.033);">dF = 0</span>
</body></html>
